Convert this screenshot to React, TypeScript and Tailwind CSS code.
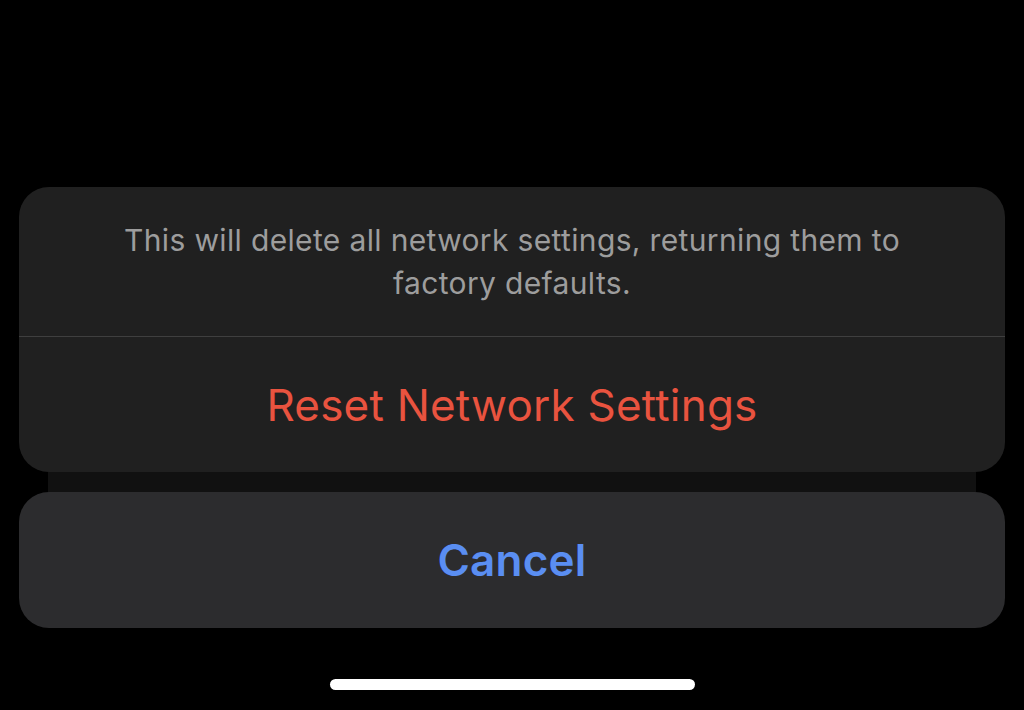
export default function App() {
    return (
        <div className="w-[1024px] h-[710px] bg-black flex flex-col overflow-hidden" style={{ fontFamily: 'Inter, "Noto Sans", sans-serif' }}>
            <div className="h-[187px]"></div>

            <div className="mx-[19px] rounded-[30px] bg-[#202020] flex flex-col">
                <div className="h-[149px] flex items-center justify-center">
                    <p className="max-w-[800px] text-center text-[30px] leading-[43px] text-[#9d9d9d] tracking-[0.35px]">
                        This will delete all network settings, returning them to factory defaults.
                    </p>
                </div>
                <div className="h-px bg-[#3f3f3f]"></div>
                <div className="h-[135px] flex items-center justify-center">
                    <span className="text-[44px] text-[#e9533f] tracking-[0.2px]">Reset Network Settings</span>
                </div>
            </div>

            <div className="mx-[48px] h-[20px] bg-[#111111]"></div>

            <div className="mx-[19px] h-[136px] rounded-[30px] bg-[#2c2c2e] flex items-center justify-center">
                <span className="text-[44px] font-semibold text-[#5a8ef2] tracking-[0.2px]">Cancel</span>
            </div>

            <div className="flex justify-center pt-[51px]">
                <div className="w-[365px] h-[11px] rounded-full bg-white"></div>
            </div>
        </div>
    );
}
